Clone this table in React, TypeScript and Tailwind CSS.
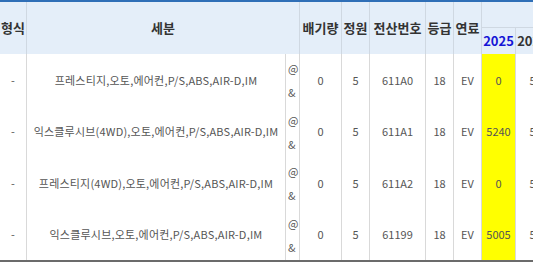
const rows = [
    { trim: '프레스티지,오토,에어컨,P/S,ABS,AIR-D,IM', code: '611A0', y2025: '0', next: '5' },
    { trim: '익스클루시브(4WD),오토,에어컨,P/S,ABS,AIR-D,IM', code: '611A1', y2025: '5240', next: '5' },
    { trim: '프레스티지(4WD),오토,에어컨,P/S,ABS,AIR-D,IM', code: '611A2', y2025: '0', next: '5' },
    { trim: '익스클루시브,오토,에어컨,P/S,ABS,AIR-D,IM', code: '61199', y2025: '5005', next: '5' },
];

const th = 'flex items-center justify-center border-r border-[#cfd8e2] bg-[#e4eef9] text-[13px] font-bold text-[#333] whitespace-nowrap';
const td = 'flex items-center justify-center border-r border-[#d9d9d9] text-[11px] text-[#555] whitespace-nowrap';

export default function App() {
    return (
        <div className="w-[533px] h-[264px] overflow-hidden bg-white" style={{ fontFamily: '"Noto Sans CJK KR", "Noto Sans", sans-serif' }}>
            <div className="w-[620px] border-t-2 border-b-2 border-t-[#2f6fb7] border-b-[#6b6b6b]">
                <div className="grid grid-cols-[27px_259px_14px_42px_28px_56px_28px_28px_34px_34px_70px] grid-rows-[26px_26px_52px_51px_52px_51px]">
                    {/* header */}
                    <div className={`${th} row-span-2 overflow-visible`}>형식</div>
                    <div className={`${th} col-span-2 row-span-2`}>세분</div>
                    <div className={`${th} row-span-2`}>배기량</div>
                    <div className={`${th} row-span-2`}>정원</div>
                    <div className={`${th} row-span-2`}>전산번호</div>
                    <div className={`${th} row-span-2`}>등급</div>
                    <div className={`${th} row-span-2`}>연료</div>
                    <div className={`${th} col-span-3 border-b`}></div>
                    <div className={`${th} text-[#1515d6]`}>2025</div>
                    <div className={th}>2026</div>
                    <div className={th}>2027</div>

                    {/* body */}
                    {rows.map((r) => (
                        <div key={r.code} className="contents">
                            <div className={td}>-</div>
                            <div className={`${td} tracking-[0.2px]`}>{r.trim}</div>
                            <div className="flex flex-col justify-center border-r border-[#d9d9d9] text-[11px] leading-[24px] text-[#555] pl-[2px]">
                                <span>@</span>
                                <span>&amp;</span>
                            </div>
                            <div className={td}>0</div>
                            <div className={td}>5</div>
                            <div className={td}>{r.code}</div>
                            <div className={td}>18</div>
                            <div className={td}>EV</div>
                            <div className={`${td} bg-[#ffff00]`}>{r.y2025}</div>
                            <div className={td}>{r.next}</div>
                            <div className={td}>{r.next}</div>
                        </div>
                    ))}
                </div>
            </div>
        </div>
    );
}
